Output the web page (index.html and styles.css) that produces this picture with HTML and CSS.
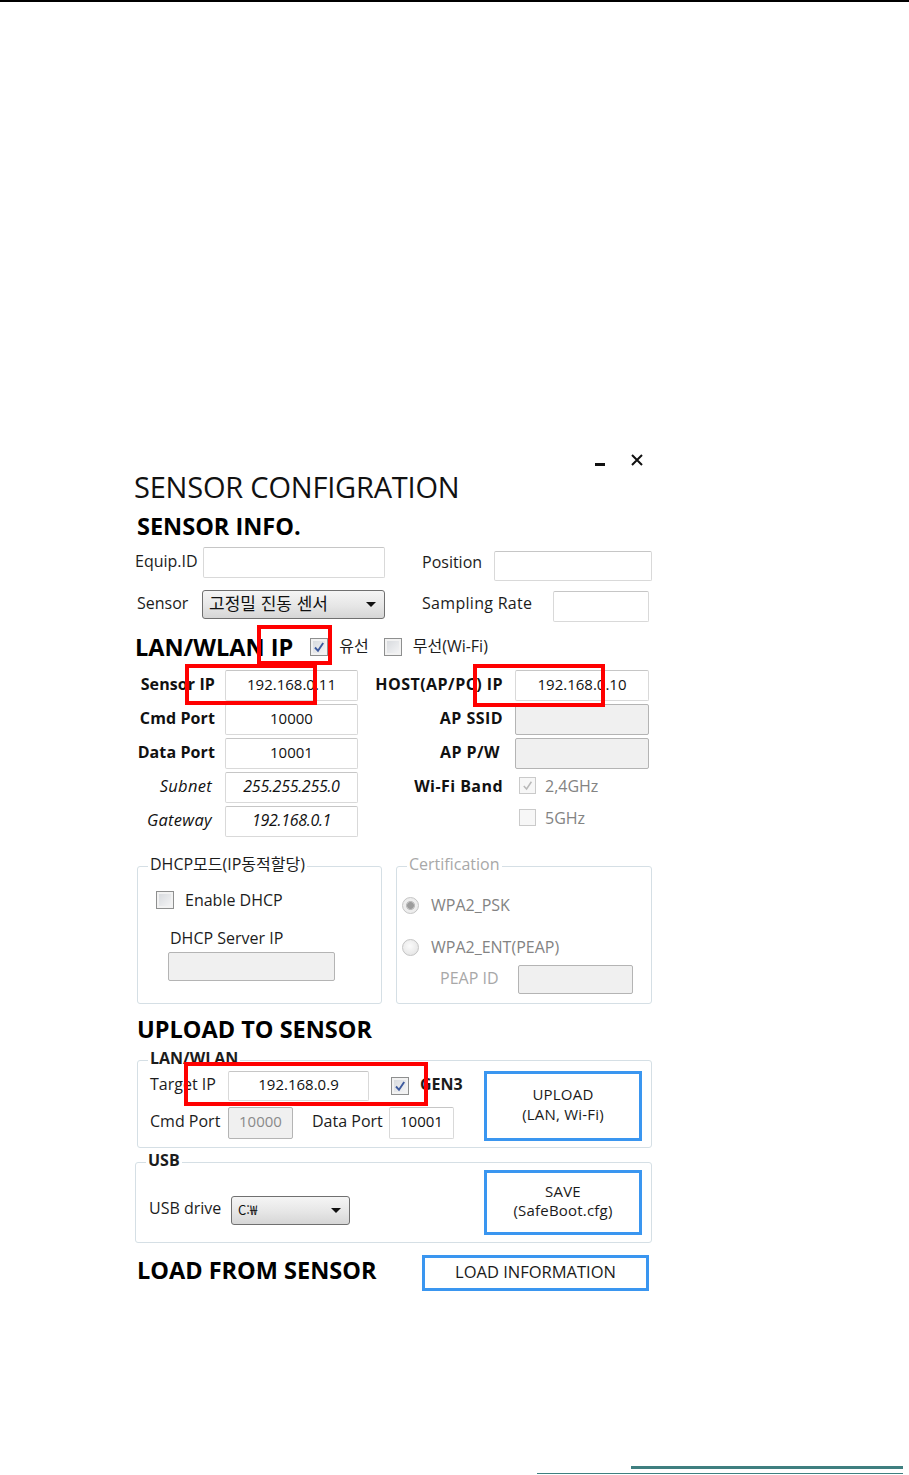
FILE: index.html
```html
<!DOCTYPE html>
<html lang="ko">
<head>
<meta charset="utf-8">
<title>Sensor Configuration</title>
<link rel="stylesheet" href="styles.css">
</head>
<body>
<div class="topline"></div>
<div class="window">
  <div class="controls">
    <span class="min"></span>
    <svg class="close" width="14" height="14" viewBox="0 0 14 14"><path d="M2 2L12 12M12 2L2 12" stroke="#111" stroke-width="2" fill="none"/></svg>
  </div>
  <h1 class="title">SENSOR CONFIGRATION</h1>
  <h2 class="sec s-info">SENSOR INFO.</h2>
  <div class="info">
    <div class="info-col">
      <div class="frow"><span class="lb l-equip">Equip.ID</span><span class="tb tb-equip"></span></div>
      <div class="frow"><span class="lb l-sensor">Sensor</span><span class="combo combo-sensor"><span class="combo-text">고정밀 진동 센서</span><span class="arrow"></span></span></div>
    </div>
    <div class="info-col info-col-r">
      <div class="frow"><span class="lb l-pos">Position</span><span class="tb tb-pos"></span></div>
      <div class="frow"><span class="lb l-rate">Sampling Rate</span><span class="tb tb-rate"></span></div>
    </div>
  </div>
  <div class="lanhead">
    <h2 class="sec">LAN/WLAN IP</h2>
    <span class="cb"><svg width="14" height="14" viewBox="0 0 14 14"><path d="M3 7.5L6 10.8L11.2 3" stroke="#3d5a9e" stroke-width="1.9" fill="none"/></svg></span><span class="opt">유선</span>
    <span class="cb"></span><span class="opt">무선(Wi-Fi)</span>
  </div>
  <div class="lan">
    <span class="glbl">Sensor IP</span><span class="tb">192.168.0.11</span><span class="glbl r">HOST(AP/PC) IP</span><span class="tb">192.168.0.10</span>
    <span class="glbl">Cmd Port</span><span class="tb">10000</span><span class="glbl r">AP SSID</span><span class="tb dis"></span>
    <span class="glbl">Data Port</span><span class="tb">10001</span><span class="glbl r pw">AP P/W</span><span class="tb dis"></span>
    <span class="glbl it">Subnet</span><span class="tb it">255.255.255.0</span><span class="glbl r">Wi-Fi Band</span><span class="band"><span class="cb dis"><svg width="13" height="13" viewBox="0 0 14 14"><path d="M3 7.5L6 10.8L11.2 3" stroke="#b9b9b9" stroke-width="1.6" fill="none"/></svg></span><span class="gray">2,4GHz</span></span>
    <span class="glbl it">Gateway</span><span class="tb it">192.168.0.1</span><span></span><span class="band b2"><span class="cb dis"></span><span class="gray">5GHz</span></span>
  </div>
  <div class="groups">
    <fieldset class="grp g-dhcp">
      <legend>DHCP모드(IP동적할당)</legend>
      <div class="chkrow"><span class="cb"></span><span>Enable DHCP</span></div>
      <div class="srvlbl">DHCP Server IP</div>
      <span class="tb dis tb-srv"></span>
    </fieldset>
    <fieldset class="grp g-cert">
      <legend class="lgray">Certification</legend>
      <div class="radrow r1"><span class="rad on"></span><span class="gray">WPA2_PSK</span></div>
      <div class="radrow r2"><span class="rad"></span><span class="gray">WPA2_ENT(PEAP)</span></div>
      <div class="peap"><span class="lb peaplbl">PEAP ID</span><span class="tb dis tb-peap"></span></div>
    </fieldset>
  </div>
  <h2 class="sec s-upload">UPLOAD TO SENSOR</h2>
  <fieldset class="grp g-lan">
    <legend class="bold">LAN/WLAN</legend>
    <div class="lan-body">
      <div class="ulrows">
        <div class="ulrow"><span class="lb ulbl">Target IP</span><span class="tb tb-target">192.168.0.9</span><span class="cb gen-cb"><svg width="14" height="14" viewBox="0 0 14 14"><path d="M3 7.5L6 10.8L11.2 3" stroke="#3d5a9e" stroke-width="1.9" fill="none"/></svg></span><span class="lb gen">GEN3</span></div>
        <div class="ulrow"><span class="lb ulbl">Cmd Port</span><span class="tb dis tb-port dtext">10000</span><span class="lb ulbl2">Data Port</span><span class="tb tb-port">10001</span></div>
      </div>
      <button class="bbtn b-upload"><span class="bl">UPLOAD</span><span class="bl">(LAN, Wi-Fi)</span></button>
    </div>
  </fieldset>
  <fieldset class="grp g-usb">
    <legend class="bold">USB</legend>
    <div class="usb-body">
      <div class="usbleft"><span class="lb usblbl">USB drive</span><span class="combo combo-usb"><span class="combo-text small">C:₩</span><span class="arrow"></span></span></div>
      <button class="bbtn b-save"><span class="bl">SAVE</span><span class="bl">(SafeBoot.cfg)</span></button>
    </div>
  </fieldset>
  <div class="loadrow">
    <h2 class="sec">LOAD FROM SENSOR</h2>
    <button class="bbtn b-load"><span class="bl">LOAD INFORMATION</span></button>
  </div>

  <span class="mark m1"></span>
  <span class="mark m2"></span>
  <span class="mark m3"></span>
  <span class="mark m4"></span>
</div>
<div class="footer">
  <div class="footbar"></div>
  <div class="footline"></div>
</div>
</body>
</html>
```
FILE: styles.css
```css
* { box-sizing: border-box; }
html, body { margin: 0; padding: 0; }
body {
  min-height: 1475px;
  display: flex;
  flex-direction: column;
  background: #fff;
  color: #1c1c1c;
  font-family: "Open Sans", "Noto Sans CJK KR", sans-serif;
  font-size: 16px;
  line-height: 20px;
}
.topline { flex: none; height: 2px; background: #000; }

.window {
  flex: none;
  position: relative;
  width: 530px;
  margin: 448px 0 0 130px;
  padding-left: 5px;
}

.controls {
  display: flex;
  justify-content: flex-end;
  align-items: flex-end;
  gap: 25px;
  height: 20px;
  padding-right: 16px;
}
.min { width: 10px; height: 3px; background: #111; margin-bottom: 4px; }
.close { display: block; margin-bottom: 3px; }

.title {
  margin: 0 0 0 -1px;
  font-size: 29px;
  line-height: 34px;
  font-weight: 400;
  color: #111;
  letter-spacing: -0.2px;
}
.sec {
  margin: 0;
  font-size: 23.5px;
  line-height: 28px;
  font-weight: 700;
  color: #000;
  white-space: nowrap;
}
.s-info { margin: 8px 0 0 2px; }

/* label text sits slightly above the centre of its row */
.lb { padding-bottom: 4px; white-space: nowrap; }

.info { display: flex; gap: 37px; margin-top: 7px; }
.info-col { display: flex; flex-direction: column; gap: 11px; }
.info-col-r { margin-top: 3px; gap: 10px; }
.frow { display: flex; align-items: center; height: 31px; }
.info-col-r .lb { padding-bottom: 8px; }
.l-equip { width: 68px; }
.l-sensor { width: 67px; padding-left: 2px; }
.l-pos { width: 72px; }
.l-rate { width: 131px; letter-spacing: 0.3px; }

.tb {
  flex: none;
  display: flex;
  align-items: center;
  justify-content: center;
  height: 31px;
  padding-bottom: 4px;
  background: #fff;
  border: 1px solid #d9d9d9;
  border-top-color: #c6c6c6;
  border-radius: 2px;
  font-size: 15px;
  color: #111;
  white-space: nowrap;
}
.tb.dis { background: #f0f0f0; border-color: #b4b4b4; }
.tb.it { font-style: italic; font-size: 16px; letter-spacing: -0.3px; }
.tb-equip { width: 182px; }
.tb-pos { width: 158px; height: 30px; }
.tb-rate { width: 96px; }

.combo {
  flex: none;
  display: flex;
  align-items: center;
  justify-content: space-between;
  height: 29px;
  padding: 0 8px 0 6px;
  border: 1px solid #707070;
  border-radius: 3px;
  background: linear-gradient(#f5f5f5, #e6e6e6 55%, #d6d6d6);
}
.combo-sensor { width: 183px; }
.combo-text { font-family: "Noto Sans CJK KR", sans-serif; font-size: 17px; line-height: 20px; color: #111; padding-bottom: 3px; }
.combo-text.small { font-size: 13px; padding-bottom: 1px; }
.arrow {
  width: 0; height: 0;
  border-left: 5px solid transparent;
  border-right: 5px solid transparent;
  border-top: 5px solid #111;
}

.lanhead { display: flex; align-items: center; height: 30px; margin-top: 10px; }
.lanhead .sec { margin-right: 17px; }
.opt { margin: 0 15px 0 11px; padding-bottom: 2px; }

.cb {
  flex: none;
  display: inline-flex;
  align-items: center;
  justify-content: center;
  width: 18px;
  height: 18px;
  border: 1px solid #8e8f8f;
  background: linear-gradient(135deg, #d4d7db, #f7f7f8);
  box-shadow: inset 0 0 0 2px #f2f2f2;
}
.cb svg { display: block; }
.cb.dis {
  width: 17px;
  height: 17px;
  border-color: #cacaca;
  background: #f7f7f7;
  box-shadow: none;
}

.lan {
  display: grid;
  grid-template-columns: 80px 133px 137px 134px;
  grid-auto-rows: 31px;
  gap: 3px 10px;
  margin-top: 8px;
}
.glbl {
  display: flex;
  align-items: center;
  justify-content: flex-end;
  padding-bottom: 4px;
  font-weight: 700;
  font-size: 16px;
  letter-spacing: 0.1px;
  white-space: nowrap;
  color: #111;
}
.glbl.r { padding-right: 2px; letter-spacing: 0.45px; }
.glbl.pw { padding-right: 5px; }
.glbl.it { font-weight: 400; font-style: italic; font-size: 16.5px; padding-right: 3px; letter-spacing: 0.3px; }
.band { display: flex; align-items: center; gap: 9px; padding: 0 0 4px 4px; }
.band.b2 { align-items: flex-start; padding: 3px 0 0 4px; }
.band.b2 .gray { line-height: 18px; }
.gray { color: #838383; }
.lgray { color: #a8a8a8; }

.groups { display: flex; gap: 14px; margin-top: 17px; padding-left: 2px; }
.grp {
  margin: 0;
  padding: 0;
  min-width: 0;
  border: 1px solid #d5dfe5;
  border-radius: 3px;
}
.grp legend { padding: 0 2px 4px; margin-left: 10px; font-size: 16px; line-height: 20px; }
.grp legend.bold { font-weight: 700; }
.g-dhcp { width: 245px; height: 150px; }
.g-cert { width: 256px; height: 150px; }

.chkrow { display: flex; align-items: center; gap: 11px; height: 20px; margin: 12px 0 0 18px; }
.srvlbl { margin: 18px 0 0 32px; height: 22px; }
.tb-srv { width: 167px; height: 29px; margin: 2px 0 0 30px; }

.radrow { display: flex; align-items: center; gap: 12px; height: 21px; margin-left: 5px; }
.radrow .gray { padding-bottom: 2px; }
.radrow.r1 { margin-top: 17px; }
.radrow.r2 { margin-top: 21px; }
.rad {
  flex: none;
  width: 17px;
  height: 17px;
  border-radius: 50%;
  border: 1px solid #c4c4c4;
  background: radial-gradient(circle at 45% 40%, #fbfbfb, #e0e0e0);
}
.rad.on {
  background: radial-gradient(circle, #9c9c9c 0 3px, #bdbdbd 3.6px 4.2px, #ededed 4.8px);
}
.peap { display: flex; align-items: center; height: 29px; margin: 7px 0 0 43px; }
.peaplbl { width: 78px; color: #a8a8a8; }
.tb-peap { width: 115px; height: 29px; }

.s-upload { margin: 11px 0 0 2px; }

.g-lan { width: 515px; margin: 5px 0 0 2px; }
.lan-body { display: flex; align-items: flex-start; margin-top: -1px; padding: 0 9px 6px 12px; }
.ulrows { display: flex; flex-direction: column; gap: 6px; }
.ulrow { display: flex; align-items: center; }
.ulbl { width: 78px; }
.tb-target { width: 141px; height: 30px; }
.gen-cb { margin-left: 22px; }
.gen { margin-left: 11px; font-weight: 700; }
.tb-port { width: 65px; height: 32px; }
.dtext { color: #8a8a8a; }
.ulbl2 { width: 77px; margin-left: 19px; }

.bbtn {
  flex: none;
  display: flex;
  flex-direction: column;
  align-items: center;
  justify-content: center;
  margin: 0 0 0 auto;
  padding: 0 0 3px;
  border: 3px solid #3a96f0;
  background: #fff;
  color: #1a1a1a;
  font-family: "Open Sans", "Noto Sans CJK KR", sans-serif;
  font-size: 15px;
  line-height: 19.5px;
  letter-spacing: 0.2px;
  text-align: center;
}
.bl { display: block; height: 19.5px; white-space: nowrap; }
.b-upload { width: 158px; height: 70px; }

.g-usb { width: 517px; margin-top: 2px; }
.usb-body { display: flex; align-items: flex-start; padding: 0 9px 7px 13px; }
.usbleft { display: flex; align-items: center; margin-top: 22px; }
.usblbl { width: 82px; padding-bottom: 6px; }
.combo-usb { width: 119px; }
.b-save { width: 158px; height: 65px; margin-top: -4px; }

.loadrow { display: flex; align-items: center; height: 36px; margin-top: 12px; }
.loadrow .sec { width: 285px; margin-left: 2px; padding-bottom: 6px; line-height: 28px; height: 34px; }
.b-load { width: 227px; height: 36px; margin-left: 0; font-size: 16.5px; letter-spacing: 0; }

.mark { position: absolute; border: 4px solid #f00; }
.m1 { left: 127px; top: 175px; width: 75px; height: 40px; }
.m2 { left: 55px; top: 214px; width: 132px; height: 41px; }
.m3 { left: 343px; top: 214px; width: 132px; height: 43px; }
.m4 { left: 54px; top: 612px; width: 244px; height: 44px; }

.footer { flex: none; margin: auto 0 0 537px; width: 366px; padding-bottom: 1px; }
.footbar { height: 3px; margin-left: 94px; background: #3f7f80; }
.footline { height: 1px; margin-top: 4px; background: #3f7f80; }
```
